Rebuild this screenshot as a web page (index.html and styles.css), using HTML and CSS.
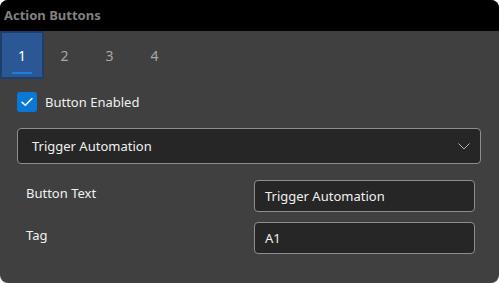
FILE: index.html
```html
<!DOCTYPE html>
<html lang="en">
<head>
    <meta charset="UTF-8">
    <meta name="viewport" content="width=device-width, initial-scale=1.0">
    <title>Action Buttons</title>
    <link rel="stylesheet" href="styles.css">
</head>
<body>
    <div class="window">
        <div class="title-bar">Action Buttons</div>

        <div class="tabs">
            <div class="tab active">1</div>
            <div class="tab">2</div>
            <div class="tab">3</div>
            <div class="tab">4</div>
        </div>

        <div class="content">
            <label class="check-row">
                <span class="checkbox">
                    <svg width="12" height="10" viewBox="0 0 12 10">
                        <path d="M1 5.2 L4.3 8.3 L11 1.5" fill="none" stroke="white" stroke-width="1.5" stroke-linecap="round" stroke-linejoin="round"/>
                    </svg>
                </span>
                <span>Button Enabled</span>
            </label>

            <div class="select">
                <span>Trigger Automation</span>
                <svg class="chevron" width="12" height="7" viewBox="0 0 12 7">
                    <path d="M0.5 0.5 L6 6 L11.5 0.5" fill="none" stroke="#b5b5b5" stroke-width="1"/>
                </svg>
            </div>

            <div class="field">
                <span class="field-label">Button Text</span>
                <div class="input">Trigger Automation</div>
            </div>
            <div class="field">
                <span class="field-label">Tag</span>
                <div class="input">A1</div>
            </div>
        </div>
    </div>
</body>
</html>
```

FILE: styles.css
```css
html, body {
    margin: 0;
    padding: 0;
    background-color: white;
}
body {
    font-family: "Noto Sans", "Open Sans", sans-serif;
    font-size: 13px;
    color: #f0f0f0;
}
.window {
    width: 499px;
    height: 283px;
    background-color: #404040;
    border-radius: 8px;
    overflow: hidden;
    display: flex;
    flex-direction: column;
}
.title-bar {
    height: 31px;
    background-color: black;
    color: #808080;
    font-weight: bold;
    font-size: 13px;
    padding-left: 4px;
    line-height: 30px;
    box-sizing: border-box;
}
.tabs {
    display: flex;
    height: 48px;
}
.tab {
    width: 45px;
    display: flex;
    align-items: center;
    justify-content: center;
    color: #a8a8a8;
    font-size: 14px;
    box-sizing: border-box;
    position: relative;
}
.tab.active {
    width: 44px;
    margin-right: -2px;
    background-color: #2b5794;
    border: 2px solid #1f3e69;
    color: white;
}
.tab.active::after {
    content: "";
    position: absolute;
    left: 10px;
    right: 10px;
    bottom: 3px;
    height: 2px;
    background-color: #1a7ee0;
}
.content {
    padding: 13px 18px 0 17px;
    display: flex;
    flex-direction: column;
}
.check-row {
    display: flex;
    align-items: center;
    gap: 8px;
    height: 20px;
}
.checkbox {
    width: 20px;
    height: 20px;
    border-radius: 3px;
    background-color: #0a78d7;
    display: flex;
    align-items: center;
    justify-content: center;
}
.select {
    margin-top: 16px;
    height: 36px;
    background-color: #262626;
    border: 1px solid #8e8e8e;
    border-radius: 4px;
    box-sizing: border-box;
    display: flex;
    align-items: center;
    justify-content: space-between;
    padding: 0 10px 0 14px;
}
.field {
    display: flex;
    align-items: center;
    justify-content: space-between;
    margin-top: 10px;
    padding: 0 6px 0 9px;
}
.select + .field {
    margin-top: 16px;
}
.field-label {
    margin-bottom: 6px;
}
.input {
    width: 221px;
    height: 32px;
    box-sizing: border-box;
    background-color: #262626;
    border: 1px solid #8e8e8e;
    border-radius: 4px;
    padding: 0 10px;
    display: flex;
    align-items: center;
}
```
